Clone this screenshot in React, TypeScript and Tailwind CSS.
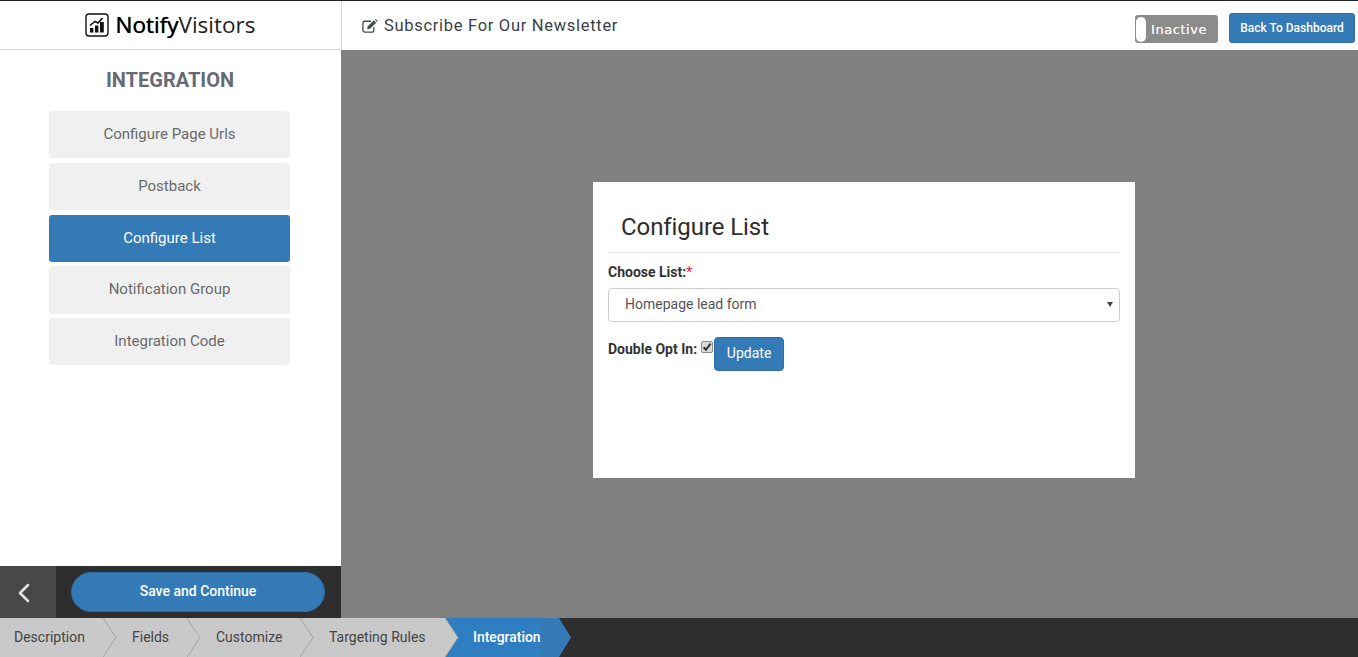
import { ChevronLeft } from "lucide-react";

const roboto = "font-['Roboto','Liberation_Sans',sans-serif]";

const navItems = [
  { label: "Configure Page Urls", cls: "h-[47px]", active: false },
  { label: "Postback", cls: "mt-[5px] h-[47px]", active: false },
  { label: "Configure List", cls: "mt-[5px] h-[47px]", active: true },
  { label: "Notification Group", cls: "mt-[4px] h-[48px] pb-[2px]", active: false },
  { label: "Integration Code", cls: "mt-[4px] h-[47px]", active: false },
];

const crumbs = [
  { label: "Description", w: "w-[103px]", pl: "pl-[14px]" },
  { label: "Fields", w: "w-[84px]", pl: "pl-[29px]" },
  { label: "Customize", w: "w-[113px]", pl: "pl-[29px]" },
  { label: "Targeting Rules", w: "w-[145px]", pl: "pl-[29px]" },
];

function Logo() {
  return (
    <div className="flex items-center gap-[6px]">
      <svg width="24" height="24" viewBox="0 0 24 24" className="shrink-0">
        <rect x="1" y="1" width="22" height="22" rx="3" fill="none" stroke="#111" strokeWidth="1.4" />
        <rect x="5" y="15" width="3.4" height="4.5" fill="#111" />
        <rect x="10" y="12.5" width="3.4" height="7" fill="#111" />
        <rect x="15" y="9" width="3.8" height="10.5" fill="#111" />
        <path d="M5 12.5 L10 8.5 L13 10 L17.5 5" fill="none" stroke="#111" strokeWidth="1.6" />
      </svg>
      <span className="font-['Open_Sans',sans-serif] text-[22.5px] leading-none text-[#111]">
        <span className="text-black [text-shadow:0_0_0.7px_#000]">Notify</span>
        <span className="text-[#222]">Visitors</span>
      </span>
    </div>
  );
}

function PencilSquare() {
  return (
    <svg width="17" height="16" viewBox="0 0 18 16" className="shrink-0">
      <path
        d="M12.5 9.2 V12.5 A2 2 0 0 1 10.5 14.5 H3 A2 2 0 0 1 1 12.5 V5 A2 2 0 0 1 3 3 H9.5"
        fill="none"
        stroke="#444b55"
        strokeWidth="1.4"
      />
      <path d="M6 8.5 L12.5 2 L15 4.5 L8.5 11 L5.5 11.5 Z" fill="#444b55" />
      <path d="M13.5 1 L14.5 0.5 L16.8 2.8 L16 3.8 Z" fill="#444b55" />
    </svg>
  );
}

export default function App() {
  return (
    <div className={`${roboto} flex h-[657px] w-[1358px] flex-col overflow-hidden bg-white`}>
      <div className="flex min-h-0 flex-1 border-t border-[#222]">
        <aside className="flex w-[341px] shrink-0 flex-col bg-white">
          <div className="flex h-[49px] shrink-0 items-center justify-center border-b border-[#d4d4d4]">
            <Logo />
          </div>
          <h2 className="mt-[17px] pr-[1px] text-center text-[20px] leading-[27px] font-bold text-[#666b73]">
            INTEGRATION
          </h2>
          <nav className="mt-[17px] flex flex-col items-center pr-[2px]">
            {navItems.map((item) => (
              <div
                key={item.label}
                className={`flex w-[241px] items-center justify-center rounded-[3px] text-[15px] ${item.cls} ${
                  item.active ? "bg-[#337ab7] text-white" : "bg-[#f0f0f0] text-[#6a6a6a]"
                }`}
              >
                {item.label}
              </div>
            ))}
          </nav>
          <div className="mt-auto flex h-[52px] shrink-0 bg-[#2e2e2e]">
            <div className="flex w-[56px] items-center justify-center bg-[#484848] pt-[2px] pr-[8px]">
              <ChevronLeft size={32} strokeWidth={1.9} className="text-[#e4e4e4]" />
            </div>
            <div className="flex flex-1 items-start pt-[6px] pl-[15px]">
              <button className="flex h-[40px] w-[254px] items-center justify-center rounded-[20px] border border-[#2e6da4] bg-[#337ab7] pb-[2px] text-[14px] font-medium text-white">
                Save and Continue
              </button>
            </div>
          </div>
        </aside>

        <main className="flex min-w-0 flex-1 flex-col">
          <header className="flex h-[49px] shrink-0 items-start border-l border-[#d4d4d4] bg-white">
            <div className="mt-[15px] ml-[20px] flex items-center gap-[5px]">
              <PencilSquare />
              <span className="text-[16.5px] leading-[20px] tracking-[0.7px] text-[#3a3f47]">
                Subscribe For Our Newsletter
              </span>
            </div>
            <div className="mt-[12px] mr-[3px] ml-auto flex items-start gap-[11px]">
              <div className="mt-[2px] flex h-[28px] w-[83px] items-center rounded-[3px] bg-[#8c8c8c] pl-[1px]">
                <span className="h-[25px] w-[10px] rounded-[5px] bg-white" />
                <span className="mt-[2px] ml-[5px] font-['DejaVu_Sans',sans-serif] text-[13px] tracking-[0.55px] text-[#f4f4f4] [text-shadow:0_0_0.6px_#fff]">
                  Inactive
                </span>
              </div>
              <button className="flex h-[30px] w-[126px] items-center justify-center rounded-[3px] border border-[#2e6da4] bg-[#337ab7] text-[12px] font-medium text-white">
                Back To Dashboard
              </button>
            </div>
          </header>

          <div className="flex flex-1 items-start bg-[#808080] pt-[132px] pl-[252px]">
            <section className="h-[296px] w-[542px] bg-white px-[15px]">
              <h3 className="flex h-[71px] items-end border-b border-[#e6e6e6] pb-[12px] pl-[13px] text-[24px] leading-[26px] tracking-[-0.08px] text-[#2d2d2d]">
                Configure List
              </h3>
              <div className="mt-[10px] text-[14px] leading-[18px] font-bold text-[#333]">
                Choose List:<span className="font-normal text-[#e8134a]">*</span>
              </div>
              <div className="relative mt-[7px] flex h-[34px] items-center rounded-[4px] border border-[#ccc] pb-[2px] pl-[16px] text-[14px] text-[#555]">
                Homepage lead form
                <span className="absolute top-[13px] right-[6px] border-x-[3px] border-t-[5px] border-x-transparent border-t-[#444]" />
              </div>
              <div className="mt-[15px] flex items-start">
                <span className="mt-[3px] text-[14px] leading-[18px] font-bold text-[#333]">Double Opt In:</span>
                <span className="relative mt-[4px] ml-[4px] h-[12px] w-[13px]">
                  <input
                    type="checkbox"
                    defaultChecked
                    className="block h-[12px] w-[12px] appearance-none rounded-[2px] border border-[#8a8a8a] bg-[#dcdcdc]"
                  />
                  <svg width="12" height="12" viewBox="0 0 12 12" className="pointer-events-none absolute top-0 left-0">
                    <path d="M2.6 6.2 L5 8.8 L9.6 2.6" fill="none" stroke="#333" strokeWidth="2" />
                  </svg>
                </span>
                <button className="flex h-[34px] w-[70px] items-center justify-center rounded-[4px] border border-[#2e6da4] bg-[#337ab7] pb-[2px] text-[14px] text-white">
                  Update
                </button>
              </div>
            </section>
          </div>
        </main>
      </div>

      <footer className="flex h-[39px] shrink-0 bg-[#2e2e2e] text-[14px] text-[#444]">
        {crumbs.map((c) => (
          <div key={c.label} className={`relative flex shrink-0 items-center bg-[#c9c9c9] ${c.w} ${c.pl}`}>
            {c.label}
            <svg width="14" height="39" viewBox="0 0 14 39" className="absolute top-0 left-full z-10">
              <path d="M0 0 L13 19.5 L0 39 Z" fill="#c9c9c9" />
              <path d="M0 0 L13 19.5 L0 39" fill="none" stroke="#a3a3a3" strokeWidth="1" />
            </svg>
          </div>
        ))}
        <div className="relative flex w-[114px] shrink-0 items-center bg-[#2e7ec1] pl-[28px] text-[13.9px] font-medium text-white">
          <span className="relative z-10">Integration</span>
          <div className="absolute inset-y-0 right-0 w-[19px] bg-[#337ab7]" />
          <svg width="12" height="39" viewBox="0 0 12 39" className="absolute top-0 left-full">
            <path d="M0 0 L12 19.5 L0 39 Z" fill="#337ab7" />
          </svg>
        </div>
      </footer>
    </div>
  );
}
